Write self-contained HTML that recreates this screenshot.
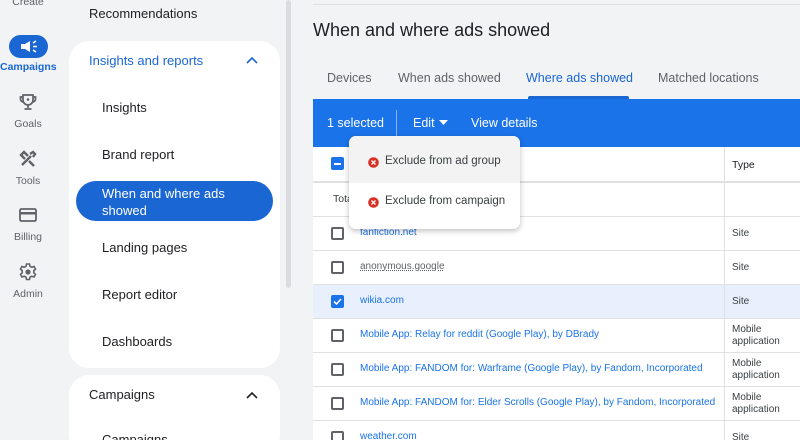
<!DOCTYPE html>
<html><head><meta charset="utf-8"><style>
*{margin:0;padding:0;box-sizing:border-box}
html,body{width:800px;height:440px;overflow:hidden}
body{background:#f1f3f4;font-family:"Liberation Sans",Arial,sans-serif;position:relative;color:#202124}
.a{position:absolute;white-space:nowrap}
.rl{font-size:10.5px;color:#5f6368;width:56px;text-align:center;left:0}
.card{position:absolute;left:69px;width:211px;background:#fff;border-radius:20px}
.ni{font-size:13px;color:#202124;left:102px}
.row{position:absolute;left:313px;width:487px;height:34px;background:#fff;border-bottom:1px solid #e0e0e0}
.cb{position:absolute;left:18px;top:10px;width:13px;height:13px;border:2px solid #5f6368;border-radius:2px}
.lk{position:absolute;left:47px;top:10px;font-size:10px;color:#1a73e8}
.ty{position:absolute;left:419px;font-size:10px;color:#3c4043;line-height:12px}
</style></head><body>
<div class="a rl" style="top:-4px">Create</div>
<div class="a" style="left:9px;top:35px;width:39px;height:23px;background:#1a66d2;border-radius:12px"></div>
<svg class="a" style="left:19px;top:39px" width="20" height="15" viewBox="0 0 20 15"><path d="M2 5h4l5-3v11l-5-3H2z" fill="#fff"/><path d="M14 4l3-2M14 7.5h4M14 11l3 2" stroke="#fff" stroke-width="1.6"/></svg>
<div class="a rl" style="top:61px;color:#1a66d2;font-weight:bold">Campaigns</div>
<svg class="a" style="left:19px;top:93px" width="18" height="18" viewBox="0 0 18 18"><path d="M4 2h10v5a5 5 0 0 1-10 0z M4 4H1.5v2a3 3 0 0 0 3 3 M14 4h2.5v2a3 3 0 0 1-3 3 M9 12v3 M5.5 16h7" fill="none" stroke="#5f6368" stroke-width="1.7"/><circle cx="9" cy="6.5" r="1.3" fill="#5f6368"/></svg>
<div class="a rl" style="top:118px">Goals</div>
<svg class="a" style="left:19px;top:150px" width="18" height="18" viewBox="0 0 18 18"><path d="M3 15L12 6M6 9L2 5l3-3 4 4M10 11l5 5M11 4l3-2 2 2-2 3" fill="none" stroke="#5f6368" stroke-width="2.4"/></svg>
<div class="a rl" style="top:175px">Tools</div>
<svg class="a" style="left:19px;top:207px" width="18" height="16" viewBox="0 0 18 16"><rect x="1" y="2" width="16" height="12" rx="1.5" fill="none" stroke="#5f6368" stroke-width="1.8"/><rect x="1" y="5" width="16" height="2.5" fill="#5f6368"/></svg>
<div class="a rl" style="top:231px">Billing</div>
<svg class="a" style="left:18px;top:262px" width="20" height="20" viewBox="0 0 20 20"><path d="M8.5 2h3l.5 2.3 1.8 1 2.2-.8 1.5 2.6-1.7 1.6v2.1l1.7 1.6-1.5 2.6-2.2-.8-1.8 1-.5 2.3h-3l-.5-2.3-1.8-1-2.2.8-1.5-2.6 1.7-1.6V8.7L2.5 7.1 4 4.5l2.2.8 1.8-1z" fill="none" stroke="#5f6368" stroke-width="1.6"/><circle cx="10" cy="10" r="2.6" fill="#5f6368"/></svg>
<div class="a rl" style="top:288px">Admin</div>

<div class="a" style="left:89px;top:6px;font-size:13px">Recommendations</div>
<div class="card" style="top:41px;height:327px"></div>
<div class="card" style="top:375px;height:80px"></div>
<div class="a" style="left:89px;top:53px;font-size:13px;color:#1a66d2">Insights and reports</div>
<svg class="a" style="left:246px;top:56px" width="12" height="8"><path d="M1 7l5-5 5 5" fill="none" stroke="#1a66d2" stroke-width="1.6"/></svg>
<div class="a ni" style="top:100px">Insights</div>
<div class="a ni" style="top:147px">Brand report</div>
<div class="a" style="left:76px;top:181px;width:197px;height:40px;background:#1a66d2;border-radius:20px"></div>
<div class="a ni" style="top:185px;color:#fff;line-height:17px">When and where ads<br>showed</div>
<div class="a ni" style="top:240px">Landing pages</div>
<div class="a ni" style="top:287px">Report editor</div>
<div class="a ni" style="top:334px">Dashboards</div>
<div class="a" style="left:89px;top:387px;font-size:13px">Campaigns</div>
<svg class="a" style="left:246px;top:391px" width="12" height="8"><path d="M1 7l5-5 5 5" fill="none" stroke="#202124" stroke-width="1.6"/></svg>
<div class="a ni" style="top:432px">Campaigns</div>
<div class="a" style="left:286px;top:0;width:5px;height:288px;background:#dadce0;border-radius:3px"></div>

<div class="a" style="left:313px;top:4px;width:487px;height:1px;background:#e0e0e0"></div>
<div class="a" style="left:313px;top:20px;font-size:18px">When and where ads showed</div>
<div class="a" style="left:327px;top:71px;font-size:12.5px;color:#5f6368">Devices</div>
<div class="a" style="left:398px;top:71px;font-size:12.5px;color:#5f6368">When ads showed</div>
<div class="a" style="left:526px;top:71px;font-size:12.5px;color:#1a66d2">Where ads showed</div>
<div class="a" style="left:658px;top:71px;font-size:12.5px;color:#5f6368">Matched locations</div>
<div class="a" style="left:528px;top:96px;width:101px;height:3px;background:#1a66d2;border-radius:2px 2px 0 0"></div>

<div class="a" style="left:313px;top:99px;width:487px;height:48px;background:#1a73e8"></div>
<div class="a" style="left:327px;top:116px;font-size:12.5px;color:#fff">1 selected</div>
<div class="a" style="left:396px;top:110px;width:1px;height:26px;background:#8ab4f8"></div>
<div class="a" style="left:413px;top:116px;font-size:12.5px;color:#fff">Edit</div>
<svg class="a" style="left:439px;top:120px" width="9" height="5"><path d="M0 0h9L4.5 5z" fill="#fff"/></svg>
<div class="a" style="left:471px;top:116px;font-size:12.5px;color:#fff">View details</div>

<div class="row" style="top:147px;height:36px;border-bottom:2px solid #e0e0e0"><div style="position:absolute;left:18px;top:10px;width:13px;height:13px;background:#1a73e8;border-radius:2px"><div style="position:absolute;left:3px;top:5.5px;width:7px;height:2px;background:#fff"></div></div><div class="ty" style="top:12px;font-size:10.5px;color:#202124">Type</div></div>
<div class="row" style="top:183px"><div style="position:absolute;left:20px;top:10px;font-size:10.5px;color:#3c4043">Total</div></div>
<div class="row" style="top:217px"><div class="cb"></div><div class="lk">fanfiction.net</div><div class="ty" style="top:11px">Site</div></div>
<div class="row" style="top:251px"><div class="cb"></div><div class="lk" style="color:#5f6368;text-decoration:underline dotted">anonymous.google</div><div class="ty" style="top:11px">Site</div></div>
<div class="row" style="top:285px;background:#e8f0fe"><div style="position:absolute;left:18px;top:10px;width:13px;height:13px;background:#1a73e8;border-radius:2px"><svg width="13" height="13"><path d="M3 6.5l2.5 2.5L10 4" fill="none" stroke="#fff" stroke-width="1.6"/></svg></div><div class="lk">wikia.com</div><div class="ty" style="top:11px">Site</div></div>
<div class="row" style="top:319px"><div class="cb"></div><div class="lk">Mobile App: Relay for reddit (Google Play), by DBrady</div><div class="ty" style="top:5px">Mobile<br>application</div></div>
<div class="row" style="top:353px"><div class="cb"></div><div class="lk">Mobile App: FANDOM for: Warframe (Google Play), by Fandom, Incorporated</div><div class="ty" style="top:5px">Mobile<br>application</div></div>
<div class="row" style="top:387px"><div class="cb"></div><div class="lk">Mobile App: FANDOM for: Elder Scrolls (Google Play), by Fandom, Incorporated</div><div class="ty" style="top:5px">Mobile<br>application</div></div>
<div class="row" style="top:421px"><div class="cb"></div><div class="lk">weather.com</div><div class="ty" style="top:11px">Site</div></div>
<div class="a" style="left:724px;top:147px;width:1px;height:293px;background:#e0e0e0"></div>

<div class="a" style="left:349px;top:136px;width:171px;height:93px;background:#fff;border-radius:7px;box-shadow:0 2px 6px rgba(0,0,0,.25);overflow:hidden">
<div style="position:absolute;left:0;top:0;width:171px;height:47px;background:#f3f3f3"></div>
<svg style="position:absolute;left:19px;top:21px" width="11" height="11"><circle cx="5.5" cy="5.5" r="5.3" fill="#d93025"/><path d="M3.5 3.5l4 4M7.5 3.5l-4 4" stroke="#fff" stroke-width="1.3"/></svg>
<div style="position:absolute;left:36px;top:19px;font-size:11.5px;color:#3c4043">Exclude from ad group</div>
<svg style="position:absolute;left:19px;top:61px" width="11" height="11"><circle cx="5.5" cy="5.5" r="5.3" fill="#d93025"/><path d="M3.5 3.5l4 4M7.5 3.5l-4 4" stroke="#fff" stroke-width="1.3"/></svg>
<div style="position:absolute;left:36px;top:59px;font-size:11.5px;color:#3c4043">Exclude from campaign</div>
</div>
</body></html>
